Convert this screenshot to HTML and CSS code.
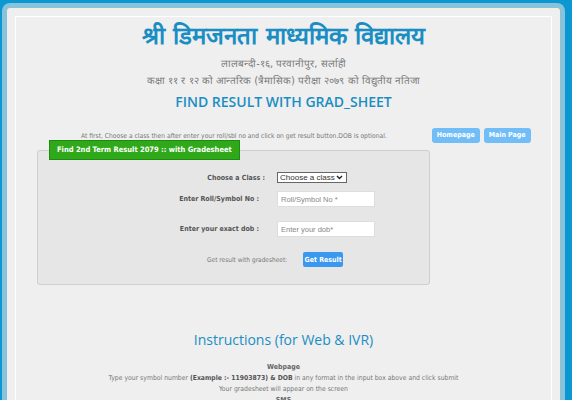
FILE: index.html
```html
<!DOCTYPE html>
<html>
<head>
<meta charset="utf-8">
<link rel="stylesheet" href="styles.css">
</head>
<body>
<div class="frame">
  <div class="inner">
    <h1 class="title">श्री डिमजनता माध्यमिक विद्यालय</h1>
    <p class="sub">लालबन्दी-१६, परवानीपुर, सर्लाही</p>
    <p class="sub">कक्षा ११ र १२ को आन्तरिक (त्रैमासिक) परीक्षा २०७९ को विद्युतीय नतिजा</p>
    <h2 class="find">FIND RESULT WITH GRAD_SHEET</h2>
    <div class="toprow">
      <p class="hint">At first, Choose a class then after enter your roll/sbl no and click on get result button.DOB is optional.</p>
      <div class="navbtns">
        <a class="navbtn">Homepage</a>
        <a class="navbtn">Main Page</a>
      </div>
    </div>
    <fieldset class="formbox">
      <legend class="legend">Find 2nd Term Result 2079 :: with Gradesheet</legend>
      <div class="row r1">
        <label class="lbl">Choose a Class :</label>
        <div class="selwrap">
          <select class="sel"><option>Choose a class</option></select>
          <svg class="chev" width="7" height="5" viewBox="0 0 7 5"><path d="M1 1 L3.5 3.5 L6 1" fill="none" stroke="#222" stroke-width="1.4"/></svg>
        </div>
      </div>
      <div class="row r2">
        <label class="lbl lbl2">Enter Roll/Symbol No :</label>
        <input class="inp" placeholder="Roll/Symbol No *">
      </div>
      <div class="row r3">
        <label class="lbl lbl2">Enter your exact dob :</label>
        <input class="inp" placeholder="Enter your dob*">
      </div>
      <div class="submitrow">
        <span class="sublbl">Get result with gradesheet:</span>
        <button class="getbtn">Get Result</button>
      </div>
    </fieldset>
    <h2 class="instr">Instructions (for Web &amp; IVR)</h2>
    <div class="ins">
      <p class="insh">Webpage</p>
      <p class="inst">Type your symbol number <b>(Example :- 11903873) &amp; DOB</b> in any format in the input box above and click submit</p>
      <p class="inst">Your gradesheet will appear on the screen</p>
      <p class="insh">SMS</p>
    </div>
  </div>
</div>
</body>
</html>
```
FILE: styles.css
```css
html, body { margin: 0; padding: 0; }
body {
  background: #0b98d2;
  padding: 3px 7px 0 2px;
  font-family: "DejaVu Sans", sans-serif;
  overflow: hidden;
  height: 400px;
  box-sizing: border-box;
}
.frame {
  border: 5px solid #88c3da;
  border-bottom: none;
  border-radius: 8px 8px 0 0;
  background: #efefef;
  padding: 8px 8px 0 8px;
  height: 600px;
}
.inner {
  border: 1px solid #ffffff;
  height: 600px;
}
.title {
  margin: 4px 0 0;
  text-align: center;
  color: #1a8ec3;
  font-size: 24px;
  line-height: 30px;
  font-weight: bold;
}
.sub {
  margin: 0;
  text-align: center;
  color: #7a7a7a;
  font-size: 10px;
  line-height: 17px;
}
.sub:first-of-type { margin-top: 4px; }
.find {
  margin: 3px 0 0;
  text-align: center;
  color: #1a8ec3;
  font-family: "Open Sans", sans-serif;
  font-weight: 600;
  font-size: 14px;
  line-height: 20px;
}
.toprow {
  display: flex;
  align-items: center;
  margin-top: 16px;
  padding-left: 65px;
  gap: 45px;
}
.hint {
  margin: 0;
  color: #777;
  font-size: 6.7px;
  font-family: "DejaVu Sans Condensed", "DejaVu Sans", sans-serif;
}
.navbtns { display: flex; gap: 4px; }
.navbtn {
  background: #71bdf7;
  color: #fff;
  font-weight: bold;
  font-size: 7px;
  padding: 0 5px;
  height: 15px;
  line-height: 15px;
  border-radius: 3px;
  font-family: "DejaVu Sans Condensed", "DejaVu Sans", sans-serif;
}
.formbox {
  margin: -3px 0 0 21px;
  width: 393px;
  box-sizing: border-box;
  height: 145px;
  background: #e6e6e6;
  border: 1px solid #cfcfcf;
  border-radius: 3px;
  padding: 0 0 0 11px;
}
.legend {
  background: #2fa919;
  border: 1px solid #1e8a10;
  color: #fff;
  font-weight: bold;
  font-size: 7.5px;
  padding: 0 7px;
  height: 20px;
  line-height: 18px;
  box-sizing: border-box;
  margin: 0;
  font-family: "DejaVu Sans Condensed", "DejaVu Sans", sans-serif;
}
.row {
  display: flex;
  align-items: center;
  gap: 10px;
}
.r1 { margin-top: 12px; height: 11px; }
.r2 { margin-top: 8px; height: 16px; }
.r3 { margin-top: 14px; height: 16px; }
.lbl {
  width: 218px;
  box-sizing: border-box;
  text-align: right;
  color: #555;
  font-weight: bold;
  font-size: 7px;
  font-family: "DejaVu Sans Condensed", "DejaVu Sans", sans-serif;
  padding-right: 2px;
}
.lbl2 { padding-right: 8px; }
.selwrap { position: relative; display: flex; }
.sel {
  appearance: none;
  -webkit-appearance: none;
  width: 70px;
  height: 11px;
  box-sizing: border-box;
  font-size: 8px;
  line-height: 9px;
  padding: 0 0 0 2px;
  border: 1px solid #666;
  border-radius: 0;
  background: #fff;
  color: #333;
  font-family: "Liberation Sans", sans-serif;
}
.chev {
  position: absolute;
  right: 4px;
  top: 3px;
  pointer-events: none;
}
.inp {
  width: 98px;
  height: 16px;
  box-sizing: border-box;
  border: 1px solid #ddd;
  font-size: 7.5px;
  padding: 0 3px;
  font-family: "Liberation Sans", sans-serif;
  background: #fff;
}
.inp::placeholder { color: #888; }
.submitrow {
  display: flex;
  align-items: center;
  margin-top: 15px;
  padding-left: 158px;
  gap: 16px;
}
.sublbl {
  color: #777;
  font-size: 6.5px;
  font-family: "DejaVu Sans Condensed", "DejaVu Sans", sans-serif;
}
.getbtn {
  background: #3b98ef;
  color: #fff;
  border: none;
  border-radius: 2px;
  font-weight: bold;
  font-size: 7px;
  height: 15px;
  width: 40px;
  padding: 0;
  font-family: "DejaVu Sans Condensed", "DejaVu Sans", sans-serif;
}
.instr {
  margin: 45px 0 0;
  text-align: center;
  color: #1a8ec3;
  font-family: "Open Sans", sans-serif;
  font-weight: 500;
  font-size: 14px;
  line-height: 20px;
}
.ins { margin-top: 12px; text-align: center; color: #777; }
.insh {
  margin: 0;
  font-weight: bold;
  font-size: 7px;
  line-height: 11px;
  color: #666;
  font-family: "DejaVu Sans Condensed", "DejaVu Sans", sans-serif;
}
.inst {
  margin: 0;
  font-size: 6.8px;
  line-height: 11px;
  font-family: "DejaVu Sans Condensed", "DejaVu Sans", sans-serif;
}
.inst b { color: #555; }
```
